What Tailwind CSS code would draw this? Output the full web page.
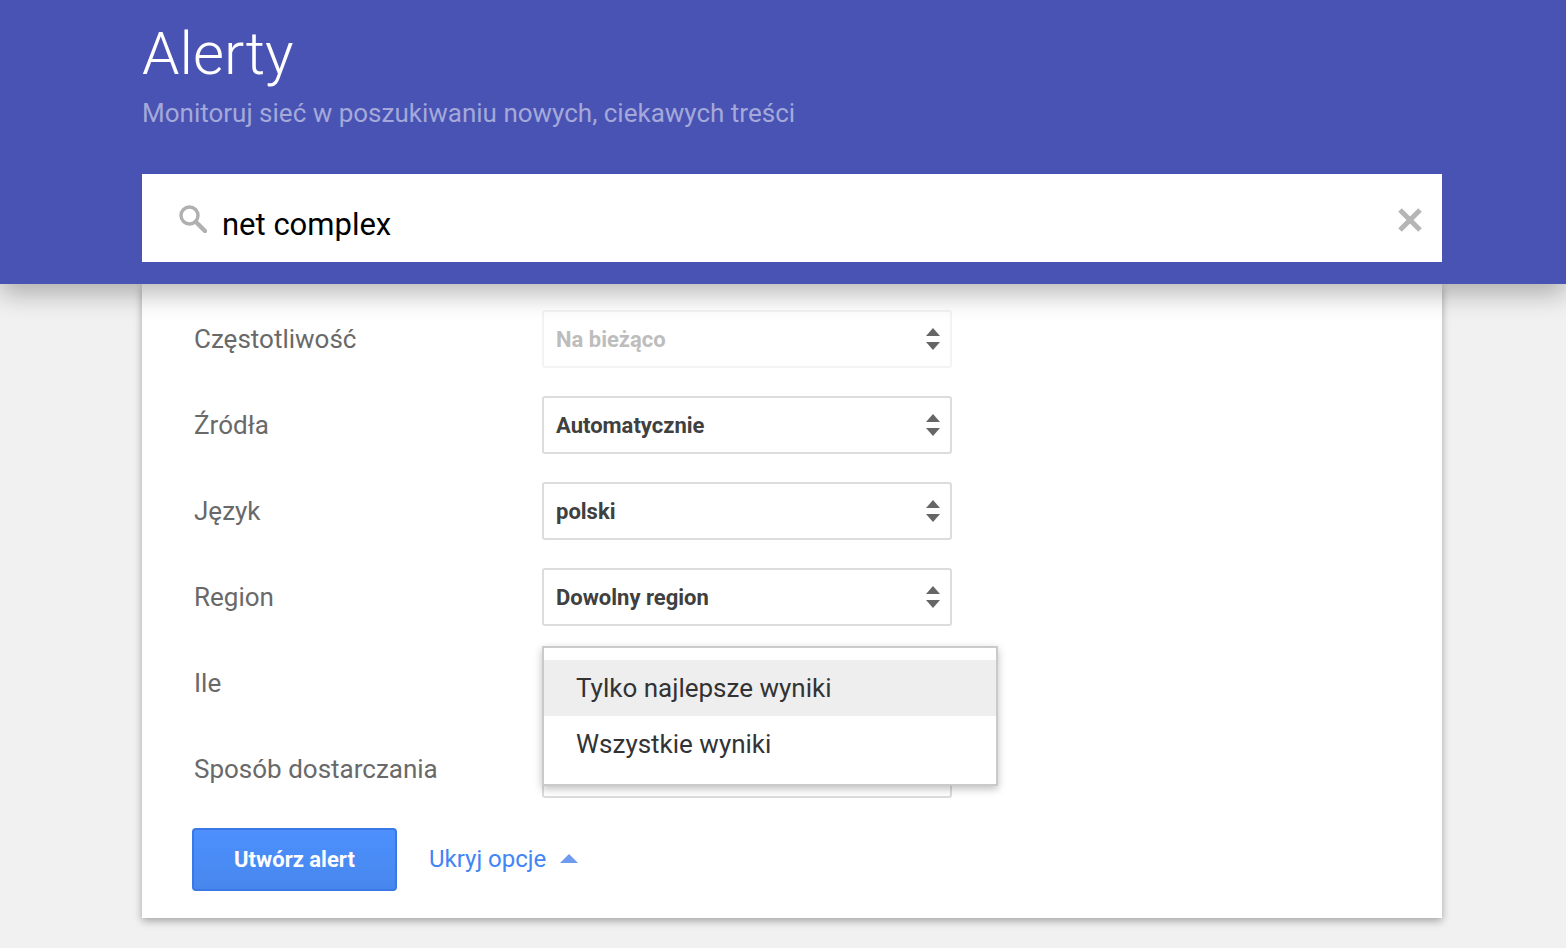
<!DOCTYPE html>
<html lang="pl">
  <head>
    <meta charset="UTF-8" />
    <title>Alerty</title>
    <script src="https://cdn.jsdelivr.net/npm/@tailwindcss/browser@4"></script>
  </head>
  <body class="h-[948px] overflow-hidden bg-[#f1f1f1] font-['Roboto',sans-serif]">
    <!-- header -->
    <header class="relative z-10 h-[284px] bg-[#4953b3] px-[142px] shadow-[0_10px_24px_rgba(0,0,0,0.28)]">
      <h1 class="pt-[16px] text-[60px] leading-[76px] font-light text-white">Alerty</h1>
      <p class="mt-[1px] text-[26px] leading-[40px] text-[#a4a9d9]">Monitoruj sieć w poszukiwaniu nowych, ciekawych treści</p>
      <div class="mt-[41px] flex h-[88px] w-[1300px] items-center bg-white pr-[19px] pl-[35px]">
        <svg class="h-[30px] w-[30px] text-[#b0b0b0]" viewBox="0 0 30 30" fill="none" stroke="currentColor" aria-hidden="true">
          <circle cx="12.5" cy="12.5" r="8.5" stroke-width="3.4" />
          <path d="M19 19l9 9" stroke-width="4.5" stroke-linecap="round" />
        </svg>
        <span class="ml-[15px] flex-1 pt-[13px] text-[31px] leading-[40px] text-black">net complex</span>
        <svg class="mt-[4px] h-[26px] w-[26px] text-[#b5b5b5]" viewBox="0 0 26 26" fill="none" stroke="currentColor" aria-hidden="true">
          <path d="M3 3l20 20M23 3L3 23" stroke-width="5" />
        </svg>
      </div>
    </header>

    <!-- options card -->
    <main class="relative mx-[142px] h-[634px] w-[1300px] bg-white pt-[26px] pl-[52px] shadow-[0_3px_8px_rgba(0,0,0,0.32)]">
      <div class="flex flex-col gap-[28px]">
        <div class="flex h-[58px] items-center">
          <span class="w-[348px] text-[26px] text-[#696969]">Częstotliwość</span>
          <div class="flex h-[58px] w-[410px] items-center justify-between rounded-[3px] border-2 border-[#f3f3f3] pr-[9px] pl-[12px] text-[22px] font-bold text-[#bdbdbd]">
            Na bieżąco
            <svg class="h-[24px] w-[16px]" viewBox="0 0 16 24" fill="#666666" aria-hidden="true"><path d="M8 1l7 8H1zM1 15h14l-7 8z" /></svg>
          </div>
        </div>
        <div class="flex h-[58px] items-center">
          <span class="w-[348px] text-[26px] text-[#696969]">Źródła</span>
          <div class="flex h-[58px] w-[410px] items-center justify-between rounded-[3px] border-2 border-[#dcdcdc] pr-[9px] pl-[12px] text-[22px] font-bold text-[#404040]">
            Automatycznie
            <svg class="h-[24px] w-[16px]" viewBox="0 0 16 24" fill="#666666" aria-hidden="true"><path d="M8 1l7 8H1zM1 15h14l-7 8z" /></svg>
          </div>
        </div>
        <div class="flex h-[58px] items-center">
          <span class="w-[348px] text-[26px] text-[#696969]">Język</span>
          <div class="flex h-[58px] w-[410px] items-center justify-between rounded-[3px] border-2 border-[#dcdcdc] pr-[9px] pl-[12px] text-[22px] font-bold text-[#404040]">
            polski
            <svg class="h-[24px] w-[16px]" viewBox="0 0 16 24" fill="#666666" aria-hidden="true"><path d="M8 1l7 8H1zM1 15h14l-7 8z" /></svg>
          </div>
        </div>
        <div class="flex h-[58px] items-center">
          <span class="w-[348px] text-[26px] text-[#696969]">Region</span>
          <div class="flex h-[58px] w-[410px] items-center justify-between rounded-[3px] border-2 border-[#dcdcdc] pr-[9px] pl-[12px] text-[22px] font-bold text-[#404040]">
            Dowolny region
            <svg class="h-[24px] w-[16px]" viewBox="0 0 16 24" fill="#666666" aria-hidden="true"><path d="M8 1l7 8H1zM1 15h14l-7 8z" /></svg>
          </div>
        </div>
        <div class="flex h-[58px] items-center">
          <span class="w-[348px] text-[26px] text-[#696969]">Ile</span>
          <div class="h-[58px] w-[410px] rounded-[3px] border-2 border-[#dcdcdc]"></div>
        </div>
        <div class="flex h-[58px] items-center">
          <span class="w-[348px] text-[26px] text-[#696969]">Sposób dostarczania</span>
          <div class="h-[58px] w-[410px] rounded-[3px] border-2 border-[#dcdcdc]"></div>
        </div>
      </div>

      <div class="mt-[30px] -ml-[2px] flex items-center">
        <button class="h-[63px] w-[205px] rounded-[4px] border-2 border-[#3b78e7] bg-gradient-to-b from-[#4d90fe] to-[#4787ed] text-[22px] font-bold text-white">Utwórz alert</button>
        <span class="mb-[2px] ml-[32px] text-[24px] text-[#4285f4]">Ukryj opcje</span>
        <svg class="mb-[2px] ml-[14px] h-[9px] w-[18px]" viewBox="0 0 18 9" fill="#6f9bef" aria-hidden="true"><path d="M9 0l9 9H0z" /></svg>
      </div>

      <!-- open dropdown -->
      <div class="absolute top-[362px] left-[400px] h-[140px] w-[456px] border-2 border-[#cacaca] bg-white pt-[12px] shadow-[0_3px_8px_rgba(0,0,0,0.25)]">
        <div class="h-[56px] bg-[#eeeeee] pl-[32px] text-[26px] leading-[56px] text-[#333333]">Tylko najlepsze wyniki</div>
        <div class="h-[56px] pl-[32px] text-[26px] leading-[56px] text-[#333333]">Wszystkie wyniki</div>
      </div>
    </main>
  </body>
</html>
